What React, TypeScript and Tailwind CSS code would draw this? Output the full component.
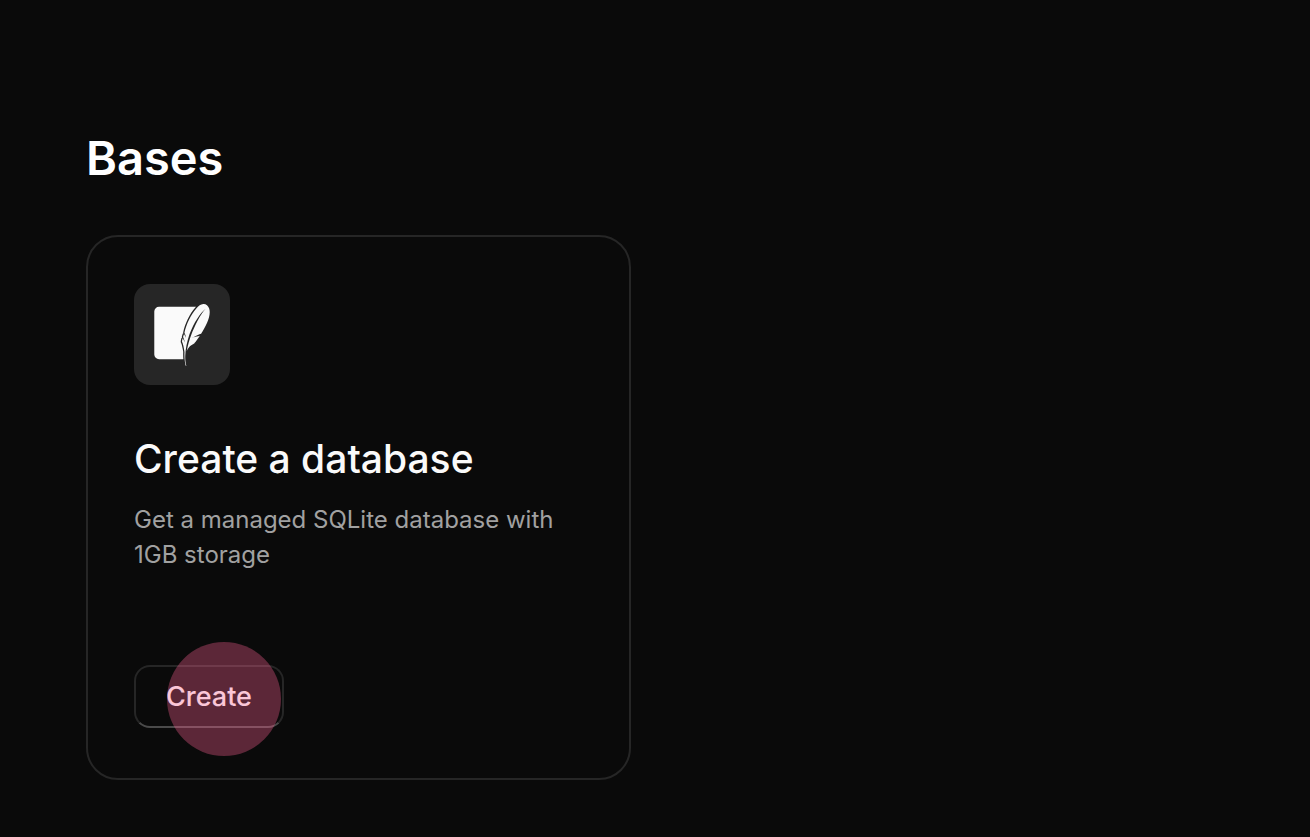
import { SiSqlite } from "react-icons/si";

const DatabaseCard = () => {
	return (
		<section className="w-full max-w-[545px] rounded-[32px] border-2 border-[#262626] px-[46px] pt-[47px] pb-[50px]">
			<div className="flex h-[101px] w-24 items-center justify-center rounded-2xl bg-[#262626]">
				<SiSqlite className="size-[62px] text-neutral-50" />
			</div>

			<h2 className="mt-[50px] text-[39px] leading-[48px] font-medium text-neutral-50">
				Create a database
			</h2>
			<p className="mt-[19px] text-[24px] leading-[35px] text-[#a1a1a1]">
				Get a managed SQLite database with 1GB storage
			</p>

			<div className="relative mt-[93px] w-fit">
				<button
					type="button"
					className="block h-[63px] rounded-2xl border-2 border-[#262626] border-b-[#4a4a4a] px-[30px] pt-[2px] text-[27px] font-medium text-neutral-50"
				>
					Create
				</button>
				{/* click highlight */}
				<span className="pointer-events-none absolute -top-[23px] left-[33px] size-[114px] rounded-full bg-[rgb(251_98_148/0.34)]"></span>
			</div>
		</section>
	);
};

const App = () => {
	return (
		<main className="min-h-screen bg-[#0a0a0a] px-[86px] pt-32 pb-14 font-['Inter',sans-serif]">
			<h1 className="text-[47px] leading-[60px] font-semibold text-white">Bases</h1>
			<div className="mt-[47px]">
				<DatabaseCard />
			</div>
		</main>
	);
};

export default App;
